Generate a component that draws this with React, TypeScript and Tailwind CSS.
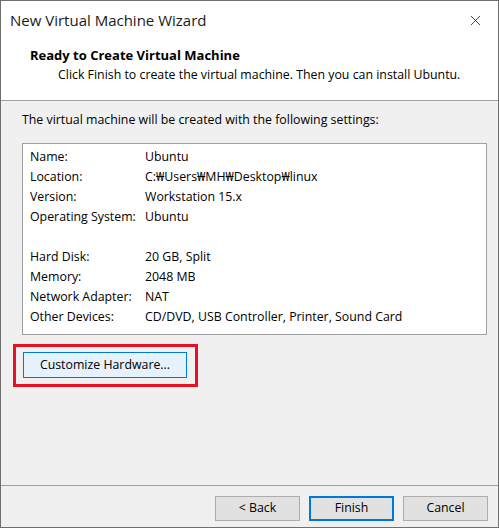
import { X } from "lucide-react";

const settings: [string, string][] = [
  ["Name:", "Ubuntu"],
  ["Location:", "C:\u20A9Users\u20A9MH\u20A9Desktop\u20A9linux"],
  ["Version:", "Workstation 15.x"],
  ["Operating System:", "Ubuntu"],
  ["", ""],
  ["Hard Disk:", "20 GB, Split"],
  ["Memory:", "2048 MB"],
  ["Network Adapter:", "NAT"],
  ["Other Devices:", "CD/DVD, USB Controller, Printer, Sound Card"],
];

export default function App() {
  return (
    <div
      className="w-[499px] h-[528px] flex flex-col border border-[#6e6e6e] bg-[#f0f0f0] text-[12.35px] text-black"
      style={{ fontFamily: '"Open Sans", "Noto Sans", sans-serif' }}
    >
      {/* Title bar + header */}
      <div className="bg-white border-b border-[#a0a0a0] h-[100px] flex flex-col">
        <div className="h-[39px] flex items-center justify-between pl-[9px] pr-[14px]">
          <span className="text-[15px] text-[#1a1a1a]">New Virtual Machine Wizard</span>
          <X className="w-[17px] h-[17px] text-black" strokeWidth={1} />
        </div>
        <div className="pl-[29px] pt-[6px]">
          <div className="font-bold text-[13px] leading-[18px]">Ready to Create Virtual Machine</div>
          <div className="pl-[28px] leading-[18px] mt-[2px]">
            Click Finish to create the virtual machine. Then you can install Ubuntu.
          </div>
        </div>
      </div>

      {/* Body */}
      <div className="flex-1 flex flex-col pl-[21px] pr-[11px] pt-[11px]">
        <div className="leading-[16px]">The virtual machine will be created with the following settings:</div>
        <div className="mt-[15px] bg-white border border-[#a0a0a0] pt-[3px] pb-[7px] pl-[7px]">
          {settings.map(([label, value], i) => (
            <div key={i} className="flex h-[20px] items-center">
              <span className="w-[115px]">{label}</span>
              <span>{value}</span>
            </div>
          ))}
        </div>
        <div className="mt-[9px] -ml-[9px] w-[185px] h-[43px] border-[3px] border-[#e81123] pl-[7px] pt-[5px]">
          <button className="w-[164px] h-[26px] bg-[#e5f1fb] border border-[#0078d7] text-[12.35px] leading-[24px]">
            Customize Hardware...
          </button>
        </div>
      </div>

      {/* Footer */}
      <div className="border-t border-[#a0a0a0] h-[42px] flex items-start justify-end gap-[9px] pt-[10px] pr-[10px]">
        <button className="w-[85px] h-[25px] bg-[#e1e1e1] border border-[#adadad]">&lt; Back</button>
        <button className="w-[85px] h-[25px] bg-[#e1e1e1] border-2 border-[#0078d7]">Finish</button>
        <button className="w-[85px] h-[25px] bg-[#e1e1e1] border border-[#adadad]">Cancel</button>
      </div>
    </div>
  );
}
